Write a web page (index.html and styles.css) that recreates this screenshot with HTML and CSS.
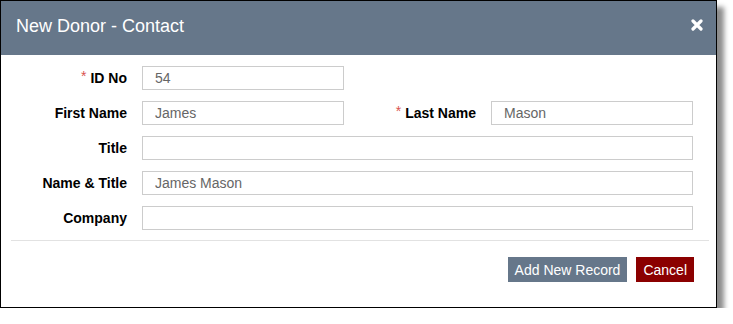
FILE: index.html
```html
<!DOCTYPE html>
<html>
<head>
  <title>New Donor - Contact</title>
  <link rel="stylesheet" href="styles.css">
</head>
<body>
  <div class="dialog">
    <div class="dialog-header">
      <h1>New Donor - Contact</h1>
      <span class="close">
        <svg width="12" height="12" viewBox="0 0 12 12">
          <path d="M2 2 L10 10 M10 2 L2 10" stroke="#fff" stroke-width="3.2" stroke-linecap="round"/>
        </svg>
      </span>
    </div>
    <form class="contact-form">
      <label class="req">ID No</label>
      <input type="text" value="54">
      <span></span><span></span>

      <label>First Name</label>
      <input type="text" value="James">
      <label class="req">Last Name</label>
      <input type="text" value="Mason">

      <label>Title</label>
      <input type="text" class="wide">

      <label>Name &amp; Title</label>
      <input type="text" class="wide" value="James Mason">

      <label>Company</label>
      <input type="text" class="wide">
    </form>
    <hr class="divider">
    <div class="dialog-footer">
      <button type="button" class="btn-add">Add New Record</button>
      <button type="button" class="btn-cancel">Cancel</button>
    </div>
  </div>
</body>
</html>
```

FILE: styles.css
```css
body {
  margin: 0;
  font-family: "Liberation Sans", Arial, sans-serif;
  background-color: #ffffff;
}

.dialog {
  width: 715px;
  height: 306px;
  border: 1px solid #000000;
  background-color: #ffffff;
  box-shadow: 7px 7px 5px rgba(0, 0, 0, 0.45);
}

.dialog-header {
  height: 54px;
  background-color: #66778a;
  display: flex;
  align-items: center;
  justify-content: space-between;
  padding: 0 13px 0 15px;
}

.dialog-header h1 {
  margin: 0;
  margin-top: -3px;
  font-size: 18px;
  font-weight: normal;
  color: #ffffff;
}

.close {
  display: flex;
  margin-top: -6px;
}

.contact-form {
  display: grid;
  grid-template-columns: 116px 202px 117px 202px;
  column-gap: 15px;
  row-gap: 11px;
  align-items: center;
  padding: 11px 0 0 10px;
}

.contact-form label {
  text-align: right;
  font-size: 14px;
  font-weight: bold;
  color: #000000;
}

.contact-form label.req::before {
  content: "*";
  color: #d9534f;
  font-weight: normal;
  font-size: 14px;
  margin-right: 4px;
  position: relative;
  top: -2px;
}

.contact-form input {
  box-sizing: border-box;
  height: 24px;
  width: 202px;
  border: 1px solid #cccccc;
  padding: 0 12px;
  font-family: "Liberation Sans", Arial, sans-serif;
  font-size: 14px;
  color: #666666;
}

.contact-form input.wide {
  grid-column: 2 / 5;
  width: 100%;
}

.divider {
  border: none;
  border-top: 1px solid #e2e2e2;
  margin: 10px 7px 0 10px;
}

.dialog-footer {
  display: flex;
  justify-content: flex-end;
  gap: 9px;
  padding: 16px 22px 0 0;
}

.dialog-footer button {
  height: 25px;
  border: none;
  padding: 0 7px;
  font-family: "Liberation Sans", Arial, sans-serif;
  font-size: 14px;
  color: #ffffff;
}

.btn-add {
  background-color: #66778a;
}

.btn-cancel {
  background-color: #8b0000;
}
```
